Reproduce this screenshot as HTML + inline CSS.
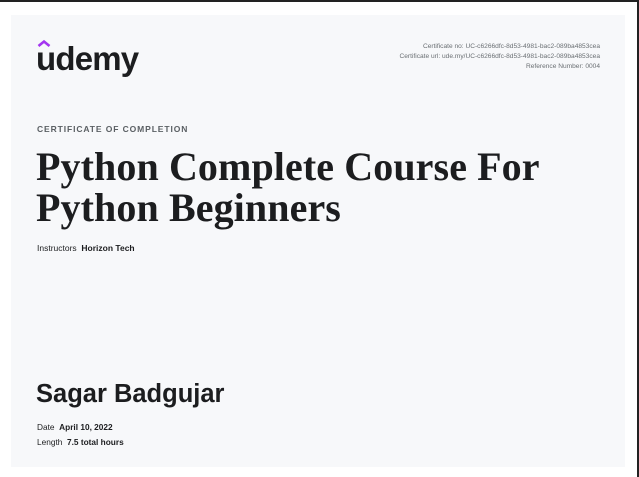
<!DOCTYPE html>
<html><head><meta charset="utf-8"><style>
html,body{margin:0;padding:0;}
body{width:639px;height:477px;background:#fff;position:relative;overflow:hidden;font-family:"Liberation Sans",sans-serif;}
.top{position:absolute;left:0;top:0;width:639px;height:2px;background:#222;}
.right{position:absolute;right:0;top:0;width:2px;height:477px;background:#222;}
.card{position:absolute;left:11px;top:15px;width:614px;height:452px;background:#f7f8fa;}
.logo{position:absolute;left:36px;top:40px;font-size:33px;font-weight:bold;color:#1c1d1f;letter-spacing:-0.8px;}
.hat{position:absolute;left:37px;top:39px;}
.meta{position:absolute;right:39px;top:42px;text-align:right;font-size:6.6px;color:#6a6f73;line-height:10px;}
.label{position:absolute;left:37px;top:124px;font-size:8.5px;font-weight:bold;letter-spacing:0.9px;color:#5a5f63;}
.title{position:absolute;left:36px;top:146px;font-family:"Liberation Serif",serif;font-weight:bold;font-size:40px;line-height:41px;color:#1c1d1f;letter-spacing:0.1px;}
.instr{position:absolute;left:37px;top:243px;font-size:8.5px;color:#1c1d1f;}
.name{position:absolute;left:36px;top:380px;font-size:25.5px;font-weight:bold;color:#1c1d1f;}
.row{position:absolute;left:37px;font-size:8.3px;color:#1c1d1f;}
b{font-weight:bold;}
</style></head><body>
<div class="top"></div><div class="right"></div>
<div class="card"></div>
<svg class="hat" width="14" height="8" viewBox="0 0 14 8"><path d="M1.5 7 L7 2.5 L12.5 7" fill="none" stroke="#a435f0" stroke-width="2.6"/></svg>
<div class="logo">udemy</div>
<div class="meta">Certificate no: UC-c6266dfc-8d53-4981-bac2-089ba4853cea<br>Certificate url: ude.my/UC-c6266dfc-8d53-4981-bac2-089ba4853cea<br>Reference Number: 0004</div>
<div class="label">CERTIFICATE OF COMPLETION</div>
<div class="title">Python Complete Course For<br>Python Beginners</div>
<div class="instr">Instructors&nbsp;&nbsp;<b>Horizon Tech</b></div>
<div class="name">Sagar Badgujar</div>
<div class="row" style="top:422px">Date&nbsp;&nbsp;<b>April 10, 2022</b></div>
<div class="row" style="top:437px">Length&nbsp;&nbsp;<b>7.5 total hours</b></div>
</body></html>
